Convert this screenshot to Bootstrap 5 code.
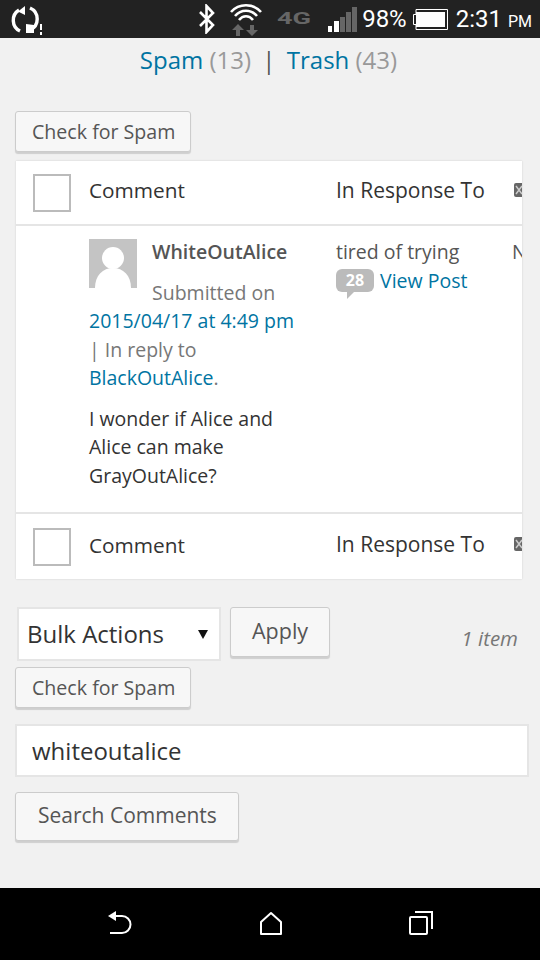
<!DOCTYPE html>
<html>
<head>
    <title>Comments</title>
    <meta charset="utf-8">
    <link rel="stylesheet" href="https://cdn.jsdelivr.net/npm/bootstrap@5.3.0/dist/css/bootstrap.min.css">
    <style>
        html, body { height: 960px; overflow: hidden; }
        body { font-family: "Open Sans", "Liberation Sans", sans-serif; background: #f1f1f1; color: #444; font-size: 19.5px; }
        a { color: #0074a2; text-decoration: none; }

        .status-strip { height: 38px; background: #222; color: #fff; font-family: Roboto, sans-serif; padding: 0 8px 0 11px; }
        .status-pct { font-size: 24px; margin-left: 4px; }
        .status-clock { font-size: 24px; margin-left: 8px; }
        .status-clock small { font-size: 16px; }
        .status-4g { color: #666; font-weight: 700; font-size: 17px; width: 36px; margin-left: 15px; margin-right: 15px; transform: scaleX(1.6); transform-origin: left center; }
        .batt-ico { margin-left: 6px; }
        .wifi-ico { margin-left: 14px; }

        .page-body { flex: 1 1 auto; padding: 0 11px 0 15px; overflow: hidden; }
        .sub-links { font-size: 24px; line-height: 32px; color: #999; padding: 6px 7px 0 0; text-align: center; margin: 0 0 35px 0; }
        .sub-links .sep { color: #555; margin: 0 5px; }

        .wp-btn { font-size: 19.6px; line-height: 26px; color: #555; background: #f7f7f7; border: 1px solid #ccc; border-radius: 3px; box-shadow: 0 2px 1px rgba(0,0,0,.14); padding: 7px 15px 6px 16px; }
        .wp-btn:hover { color: #555; background: #f7f7f7; border-color: #ccc; }

        .list-wrap { width: 506px; margin: 9px 0 0 1px; background: #fff; box-shadow: 0 0 2px rgba(0,0,0,.14); overflow: hidden; }
        .list-wrap table { width: 560px; table-layout: fixed; margin: 0; font-size: 19.5px; color: #333; }
        .list-wrap td, .list-wrap th { padding: 0; font-weight: 400; border: 0; vertical-align: top; background: transparent; }
        .col-check { width: 73px; }
        .col-comment { width: 247px; }
        .col-response { width: 176px; }
        .head-row th { height: 64px; vertical-align: middle; border-bottom: 2px solid #e5e5e5; }
        .foot-row th { height: 66px; vertical-align: middle; border-top: 2px solid #e5e5e5; }
        .fake-check { display: block; width: 38px; height: 38px; margin-left: 17px; border: 2px solid #bbb; background: #fff; }
        .head-row .fake-check { margin-top: 1px; }
        .bubble-ico { display: block; width: 14px; height: 14px; margin: 0 0 6px 2px; }
        .head-label { display: block; font-size: 20.8px; padding-bottom: 3px; }
        .resp-title { display: block; font-size: 21px; padding-bottom: 3px; }
        .foot-row .head-label { padding-bottom: 2px; }
        .foot-row .resp-title { padding-bottom: 4px; }

        .list-wrap .cmt-cell { padding: 12px 40px 22px 0; line-height: 28.5px; color: #777; }
        .avatar-box { float: left; width: 48px; height: 49px; margin-right: 15px; margin-bottom: 18px; margin-top: 1px; background: #c4c4c4; }
        .avatar-box svg { display: block; }
        .cmt-author { font-weight: 600; color: #555; margin-bottom: 12px; }
        .cmt-text { color: #333; margin: 12px 0 0 0; clear: both; }
        .list-wrap .resp-cell { padding-top: 12px; color: #555; line-height: 28.5px; }
        .count-bubble { position: relative; display: inline-block; width: 38px; height: 23px; line-height: 23px; margin-right: 6px; background: #bbb; color: #fff; border-radius: 6px; text-align: center; font-size: 16px; font-weight: 700; vertical-align: 2px; }
        .count-bubble::after { content: ""; position: absolute; left: 11px; top: 23px; border-style: solid; border-width: 7px 7px 0 0; border-color: #bbb transparent transparent transparent; }
        .list-wrap .date-cell { padding-top: 12px; color: #555; line-height: 28.5px; white-space: nowrap; }

        .bulk-row { margin: 28px 0 0 2px; width: 504px; }
        .bulk-select { width: 204px; height: 54px; flex: 0 0 auto; padding: 0 0 0 8px; font-size: 24px; color: #333; background-color: #fff; border: 2px solid #e5e5e5; border-radius: 0; box-shadow: none; --bs-form-select-bg-img: none; background-image: url("data:image/svg+xml,%3csvg xmlns='http://www.w3.org/2000/svg' width='10' height='10'%3e%3cpath d='M0 1h10L5 10z' fill='%23111'/%3e%3c/svg%3e"); background-repeat: no-repeat; background-position: right 11px top 20px; background-size: 10px 10px; }
        .apply-btn { font-size: 21.5px; line-height: 30px; padding: 8px 21px 10px 21px; margin-left: 9px; }
        .item-count { margin-left: auto; font-style: italic; color: #777; font-size: 20.5px; margin-top: 16px; margin-right: 3px; }
        .spam-again { margin-top: 6px; }
        .search-field { width: 514px; height: 53px; margin-top: 16px; padding: 0 15px; font-size: 24px; color: #333; border: 2px solid #e5e5e5; border-radius: 0; background: #fff; }
        .search-field:focus { box-shadow: none; border-color: #e5e5e5; }
        .search-btn { padding: 6px 21px 9px 22px; line-height: 32px; font-size: 21px; margin-top: 15px; }

        .nav-strip { height: 72px; background: #000; gap: 126px; padding-bottom: 3px; }
    </style>
</head>
<body class="d-flex flex-column">
    <!-- status bar -->
    <div class="status-strip d-flex align-items-center flex-shrink-0">
        <svg width="32" height="34" viewBox="0 0 32 34" fill="none" stroke="#fff" stroke-width="3.4">
            <path d="M8 8A12 12 0 0 0 9 29"/>
            <path d="M14 4 7 9.500 14 13z" fill="#fff" stroke="none"/>
            <path d="M19 28A12 12 0 0 0 19 6"/>
            <path d="M15 22l8 1 0 8-8 0z" fill="#fff" stroke="none"/>
            <path d="M30 22v6M30 30v3" stroke-width="2"/>
        </svg>
        <svg class="ms-auto" width="18" height="30" viewBox="0 0 18 30" fill="none" stroke="#fff" stroke-width="2.600">
            <path d="M2 8 15 21 8.500 28V2L15 9 2 22"/>
        </svg>
        <svg class="wifi-ico" width="32" height="34" viewBox="0 0 32 34" fill="none" stroke="#fff" stroke-width="2.600">
            <path d="M1 10C9 1 23 1 31 10"/>
            <path d="M5 14C11 7 21 7 27 14"/>
            <path d="M9 18C13 13 19 13 23 18"/>
            <path d="M6 34v-6H2L8 22l6 6h-4v6zM20 23v5h-4l6 6 6-6h-4v-5z" fill="#666" stroke="none"/>
        </svg>
        <span class="status-4g">4G</span>
        <svg width="30" height="26" viewBox="0 0 30 26">
            <rect x="0" y="20" width="4" height="6" fill="#fff"/>
            <rect x="6" y="15" width="5" height="11" fill="#fff"/>
            <rect x="12" y="11" width="5" height="15" fill="#666"/>
            <rect x="18" y="6" width="5" height="20" fill="#666"/>
            <rect x="24" y="1" width="5" height="25" fill="#666"/>
        </svg>
        <span class="status-pct">98%</span>
        <svg class="batt-ico" width="35" height="21" viewBox="0 0 35 21">
            <path d="M3 5.500H.500v10H3v5h31.500V.500H3z" fill="none" stroke="#fff"/>
            <rect x="3" y="3" width="29" height="15" fill="#fff"/>
        </svg>
        <span class="status-clock">2:31 <small>PM</small></span>
    </div>

    <div class="page-body d-flex flex-column align-items-start">
        <p class="sub-links w-100"><a href="#">Spam</a> (13) <span class="sep">|</span> <a href="#">Trash</a> (43)</p>
        <button class="btn wp-btn" type="button">Check for Spam</button>

        <div class="list-wrap">
            <table class="table">
                <colgroup>
                    <col class="col-check"><col class="col-comment"><col class="col-response"><col>
                </colgroup>
                <thead>
                    <tr class="head-row">
                        <th><span class="fake-check"></span></th>
                        <th><span class="head-label">Comment</span></th>
                        <th><span class="resp-title">In Response To</span></th>
                        <th>
                            <svg class="bubble-ico" viewBox="0 0 14 14"><rect width="14" height="14" rx="2" fill="#666"/><path d="M2 3l6 8M8 3 2 11" stroke="#ccc" stroke-width="1.500"/></svg>
                        </th>
                    </tr>
                </thead>
                <tbody>
                    <tr>
                        <td></td>
                        <td class="cmt-cell">
                            <div class="avatar-box">
                                <svg width="48" height="49" viewBox="0 0 48 49">
                                    <circle cx="24" cy="19" r="11" fill="#fff"/>
                                    <path d="M6 49C6 36 14 29 24 29S42 36 42 49z" fill="#fff"/>
                                </svg>
                            </div>
                            <div class="cmt-author">WhiteOutAlice</div>
                            <div>Submitted on <a href="#">2015/04/17 at 4:49 pm</a> | In reply to <a href="#">BlackOutAlice</a>.</div>
                            <p class="cmt-text">I wonder if Alice and Alice can make GrayOutAlice?</p>
                        </td>
                        <td class="resp-cell">
                            <div>tired of trying</div>
                            <div><span class="count-bubble">28</span><a href="#">View Post</a></div>
                        </td>
                        <td class="date-cell">N</td>
                    </tr>
                </tbody>
                <tfoot>
                    <tr class="foot-row">
                        <th><span class="fake-check"></span></th>
                        <th><span class="head-label">Comment</span></th>
                        <th><span class="resp-title">In Response To</span></th>
                        <th>
                            <svg class="bubble-ico" viewBox="0 0 14 14"><rect width="14" height="14" rx="2" fill="#666"/><path d="M2 3l6 8M8 3 2 11" stroke="#ccc" stroke-width="1.500"/></svg>
                        </th>
                    </tr>
                </tfoot>
            </table>
        </div>

        <div class="bulk-row d-flex align-items-start">
            <select class="form-select bulk-select"><option>Bulk Actions</option></select>
            <button class="btn wp-btn apply-btn" type="button">Apply</button>
            <span class="item-count">1 item</span>
        </div>
        <button class="btn wp-btn spam-again" type="button">Check for Spam</button>
        <input class="form-control search-field" type="search" value="whiteoutalice">
        <button class="btn wp-btn search-btn" type="button">Search Comments</button>
    </div>

    <!-- android nav buttons -->
    <div class="nav-strip d-flex align-items-center justify-content-center flex-shrink-0">
        <svg width="26" height="24" viewBox="0 0 26 24" fill="none" stroke="#fff" stroke-width="2">
            <path d="M5 5H15A8.500 8.500 0 0 1 15 22H3"/>
            <path d="M1 5 9 0V10z" fill="#fff" stroke="none"/>
        </svg>
        <svg width="24" height="24" viewBox="0 0 24 24" fill="none" stroke="#fff" stroke-width="2">
            <path d="M12 2 2 11V23H22V11z" stroke-linejoin="round"/>
        </svg>
        <svg width="24" height="24" viewBox="0 0 24 24" fill="none" stroke="#fff" stroke-width="2">
            <rect x="1" y="6" width="17" height="17" rx="1"/>
            <path d="M6 1H23V18"/>
        </svg>
    </div>
</body>
</html>
